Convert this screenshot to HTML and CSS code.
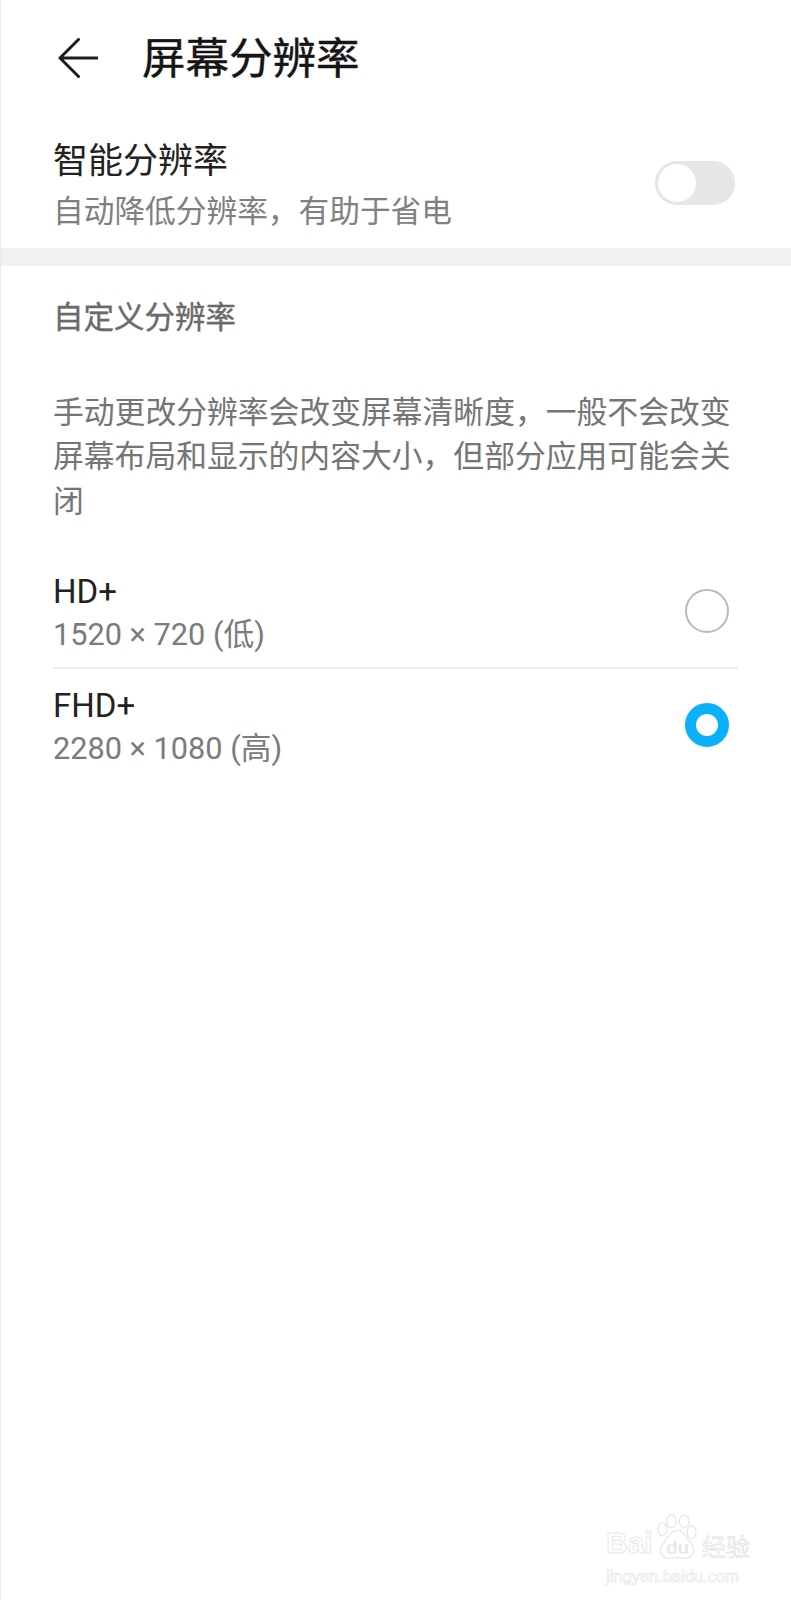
FILE: index.html
```html
<!DOCTYPE html>
<html lang="zh">
<head>
<meta charset="utf-8">
<title>屏幕分辨率</title>
<link rel="stylesheet" href="styles.css">
</head>
<body>
<div class="screen">
  <header class="topbar">
    <svg class="back" width="40" height="40" viewBox="0 0 40 40" aria-hidden="true"><path d="M20.5 1.5 L2 20 L20.5 38.5 M2 20 H39" fill="none" stroke="#1c1c1c" stroke-width="3" stroke-linecap="round" stroke-linejoin="round"/></svg>
    <h1 class="title">屏幕分辨率</h1>
  </header>
  <section class="smart">
    <div class="texts smart-texts">
      <div class="smart-name">智能分辨率</div>
      <div class="smart-sub">自动降低分辨率，有助于省电</div>
    </div>
    <div class="switch"><span class="knob"></span></div>
  </section>
  <div class="band"></div>
  <section class="custom">
    <h2 class="section-title">自定义分辨率</h2>
    <p class="desc">手动更改分辨率会改变屏幕清晰度，一般不会改变屏幕布局和显示的内容大小，但部分应用可能会关闭</p>
    <div class="options">
      <div class="option">
        <div class="texts opt-texts">
          <div class="opt-name">HD+</div>
          <div class="opt-sub">1520 × 720 (低)</div>
        </div>
        <span class="radio"></span>
      </div>
      <div class="option">
        <div class="texts opt-texts">
          <div class="opt-name">FHD+</div>
          <div class="opt-sub">2280 × 1080 (高)</div>
        </div>
        <span class="radio on"></span>
      </div>
    </div>
  </section>
  <div class="watermark" aria-hidden="true">
    <svg class="paw" width="44" height="47" viewBox="0 0 44 52"><g fill="#fff" stroke="#e8e8e8" stroke-width="1.5"><ellipse cx="6" cy="17" rx="5" ry="7"/><ellipse cx="16" cy="8" rx="5.5" ry="7"/><ellipse cx="30" cy="8" rx="5.5" ry="7"/><ellipse cx="38" cy="20" rx="5" ry="7"/><path d="M22 18 C30 18 33 28 38 33 C44 41 38 50 29 49 C24 48 20 48 15 49 C6 50 1 42 6 34 C11 28 14 18 22 18 Z"/></g></svg>
    <div class="wm-row"><span class="wm-bai">Bai</span><span class="wm-du">du</span><span class="wm-cn">经验</span></div>
    <div class="wm-url">jingyan.baidu.com</div>
  </div>
</div>
</body>
</html>
```
FILE: styles.css
```css
* { box-sizing: border-box; }
html, body { margin: 0; padding: 0; background: #fff; }
body { font-family: Roboto, "Noto Sans CJK SC", sans-serif; }
.screen {
  position: relative;
  width: 791px;
  height: 1600px;
  overflow: hidden;
  background: #fff;
  border-left: 1px solid #ececec;
}
.topbar {
  display: flex;
  align-items: center;
  height: 120px;
  padding-left: 57px;
}
.back { flex: none; margin-bottom: 5px; }
.title {
  margin: 0 0 0 44px;
  font-size: 43.5px;
  line-height: 60px;
  font-weight: 400;
  color: #151515;
  -webkit-text-stroke: 0.4px #151515;
}
.smart {
  display: flex;
  justify-content: space-between;
  align-items: center;
  height: 128px;
  padding: 0 56px 0 52px;
}
.smart-texts { padding-top: 5px; }
.smart-name {
  font-size: 35px;
  line-height: 46px;
  color: #222;
}
.smart-sub {
  margin-top: 5px;
  font-size: 30.7px;
  line-height: 44px;
  color: #808080;
}
.switch {
  width: 80px;
  height: 44px;
  margin-bottom: 2px;
  padding: 3px;
  border-radius: 22px;
  background: #e6e6e6;
}
.knob {
  display: block;
  width: 38px;
  height: 38px;
  border-radius: 50%;
  background: #fff;
}
.band { height: 18px; background: #f1f1f1; }
.custom { padding: 0 0 0 52px; }
.section-title {
  margin: 29px 0 0;
  font-size: 30.5px;
  line-height: 46px;
  font-weight: 400;
  color: #6a6a6a;
  -webkit-text-stroke: 0.4px #6a6a6a;
}
.desc {
  width: 690px;
  margin: 50px 0 0;
  font-size: 30.8px;
  line-height: 44.3px;
  color: #757575;
}
.options { width: 685px; margin-top: 30px; }
.option {
  display: flex;
  justify-content: space-between;
  align-items: center;
  height: 113px;
  padding-right: 9px;
}
.option + .option { border-top: 2px solid #ececec; }
.opt-texts { padding-top: 6px; }
.opt-name {
  font-size: 33px;
  line-height: 44px;
  color: #222;
}
.opt-sub {
  font-size: 30.7px;
  line-height: 42px;
  color: #7b7b7b;
}
.radio {
  width: 44px;
  height: 44px;
  margin-top: 2px;
  border-radius: 50%;
  border: 2px solid #b9b9b9;
}
.radio.on { border: 11px solid #0bb0fb; }
.watermark {
  position: absolute;
  left: 605px;
  top: 1512px;
  width: 150px;
}
.paw { position: absolute; left: 49px; top: 2px; }
.wm-row {
  position: relative;
  display: flex;
  align-items: flex-end;
  height: 50px;
}
.wm-bai {
  width: 49px;
  font: 700 30px/38px "Liberation Sans", sans-serif;
  color: #fff;
  -webkit-text-stroke: 1px #e8e8e8;
}
.wm-du {
  width: 45px;
  text-align: center;
  font: 700 19px/28px "Liberation Sans", sans-serif;
  color: #e8e8e8;
}
.wm-cn {
  margin-left: 2px;
  font: 400 24px/32px "Noto Sans CJK SC", sans-serif;
  color: #fff;
  -webkit-text-stroke: 0.8px #e4e4e4;
}
.wm-url {
  margin-top: 4px;
  font: 400 16.5px/20px "Liberation Sans", sans-serif;
  color: #fff;
  -webkit-text-stroke: 0.7px #e8e8e8;
}
```
